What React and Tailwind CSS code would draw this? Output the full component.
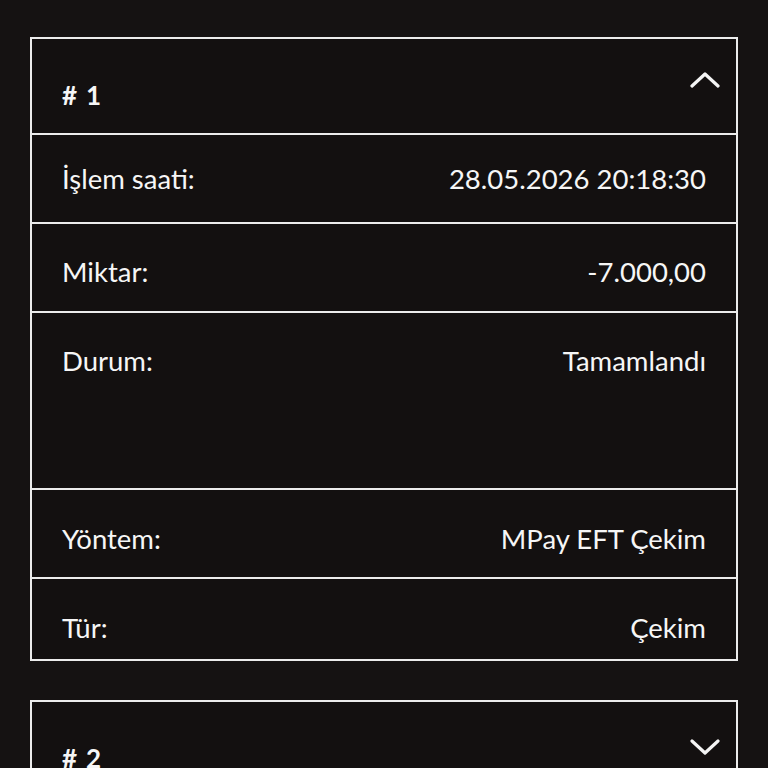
import React from "react";

const rows = [
  { label: "İşlem saati:", value: "28.05.2026 20:18:30", h: "h-[89px]", pt: "pt-[27px]" },
  { label: "Miktar:", value: "-7.000,00", h: "h-[89px]", pt: "pt-[31px]" },
  { label: "Durum:", value: "Tamamlandı", h: "h-[177px]", pt: "pt-[31px]" },
  { label: "Yöntem:", value: "MPay EFT Çekim", h: "h-[89px]", pt: "pt-[32px]" },
  { label: "Tür:", value: "Çekim", h: "h-[82px]", pt: "pt-[32px]" },
];

function Chevron({ up }) {
  return (
    <svg width="30" height="18" viewBox="0 0 30 18" fill="none" className="shrink-0">
      <path
        d={up ? "M2 15 L15 3 L28 15" : "M2 3 L15 15 L28 3"}
        stroke="#f4f4f4"
        strokeWidth="3.2"
        strokeLinecap="round"
        strokeLinejoin="round"
      />
    </svg>
  );
}

function Card({ index, open, children }) {
  return (
    <div className="border-2 border-[#ececec] bg-[#131010]">
      <div className="flex h-[94px] justify-between pl-[30px] pr-[16px]">
        <div className="pt-[41px] text-[26px] font-bold leading-[30px] text-[#f6f6f6]">
          #<span className="ml-[9px]">{index}</span>
        </div>
        <div className={open ? "pt-[32px]" : "pt-[36px]"}>
          <Chevron up={open} />
        </div>
      </div>
      {children}
    </div>
  );
}

export default function App() {
  return (
    <div
      className="min-h-[768px] bg-[#151212] px-[30px] pt-[37px] pb-[40px]"
      style={{ fontFamily: "Lato, 'Noto Sans', sans-serif" }}
    >
      <div className="flex flex-col gap-[39px]">
        <Card index={1} open>
          {rows.map((r) => (
            <div
              key={r.label}
              className={`flex justify-between border-t-2 border-[#ececec] px-[30px] ${r.h} ${r.pt}`}
            >
              <span className="text-[27.5px] leading-[34px] text-[#f6f6f6]">{r.label}</span>
              <span className="text-[27.5px] leading-[34px] text-[#f6f6f6]">{r.value}</span>
            </div>
          ))}
        </Card>
        <Card index={2} open={false} />
      </div>
    </div>
  );
}
